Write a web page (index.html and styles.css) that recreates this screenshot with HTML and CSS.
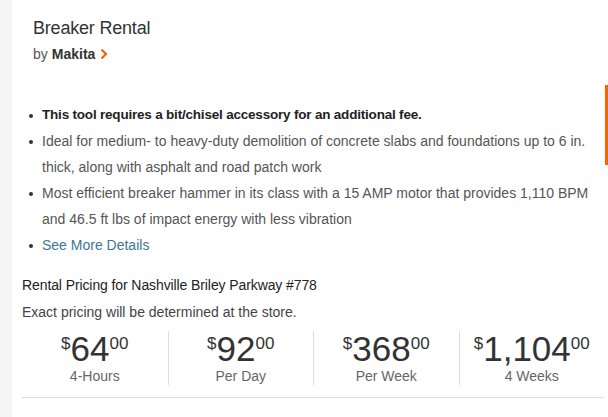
FILE: index.html
```html
<!DOCTYPE html>
<html>
<head>
<meta charset="utf-8">
<link rel="stylesheet" href="styles.css">
</head>
<body>
<div class="panel">
  <div class="head">
    <h1 class="title">Breaker Rental</h1>
    <div class="brand">by <b>Makita</b> <svg class="chev" width="8" height="12" viewBox="0 0 8 12"><polyline points="1.5,1.5 6,6 1.5,10.5" fill="none" stroke="#f96302" stroke-width="2.2"/></svg></div>
  </div>
  <ul class="bullets">
    <li class="strong">This tool requires a bit/chisel accessory for an additional fee.</li>
    <li>Ideal for medium- to heavy-duty demolition of concrete slabs and foundations up to 6 in. thick, along with asphalt and road patch work</li>
    <li>Most efficient breaker hammer in its class with a 15 AMP motor that provides 1,110 BPM and 46.5 ft lbs of impact energy with less vibration</li>
    <li class="link">See More Details</li>
  </ul>
  <div class="pricing">
    <div class="ptitle">Rental Pricing for Nashville Briley Parkway #778</div>
    <div class="pnote">Exact pricing will be determined at the store.</div>
    <div class="cols">
      <div class="col"><div class="price"><span class="sup">$</span>64<span class="sup">00</span></div><div class="lbl">4-Hours</div></div>
      <div class="col"><div class="price"><span class="sup">$</span>92<span class="sup">00</span></div><div class="lbl">Per Day</div></div>
      <div class="col"><div class="price"><span class="sup">$</span>368<span class="sup">00</span></div><div class="lbl">Per Week</div></div>
      <div class="col"><div class="price"><span class="sup">$</span>1,104<span class="sup">00</span></div><div class="lbl">4 Weeks</div></div>
    </div>
    <div class="rule"></div>
  </div>
  <div class="scroll"></div>
</div>
</body>
</html>
```
FILE: styles.css
```css
html, body {
  margin: 0;
  padding: 0;
  background: #f5f5f5;
  font-family: "Liberation Sans", Arial, sans-serif;
}
.panel {
  position: relative;
  margin-left: 12px;
  background: #fff;
  height: 417px;
  overflow: hidden;
  box-sizing: border-box;
  padding: 17px 4px 0 10px;
}
.head {
  padding-left: 11px;
}
.title {
  margin: 0;
  font-size: 18px;
  line-height: 22px;
  font-weight: normal;
  color: #333;
  letter-spacing: -0.2px;
}
.brand {
  margin-top: 6px;
  font-size: 14px;
  line-height: 18px;
  color: #555;
  display: flex;
  align-items: center;
  gap: 4px;
}
.brand b {
  color: #333;
}
.chev {
  margin-left: 1px;
}
.bullets {
  list-style: none;
  margin: 39px 0 0 0;
  padding: 0 0 0 8px;
  font-size: 14px;
  line-height: 26px;
  color: #555;
}
.bullets li {
  position: relative;
  padding-left: 12px;
}
.bullets li::before {
  content: "";
  position: absolute;
  left: -1px;
  top: 12px;
  width: 4px;
  height: 4px;
  border-radius: 50%;
  background: #333;
}
.bullets li.strong {
  font-size: 13.5px;
  font-weight: bold;
  color: #222;
  letter-spacing: -0.2px;
}
.bullets li.link {
  color: #3e7697;
}
.pricing {
  margin-top: 18px;
}
.ptitle {
  font-size: 14px;
  line-height: 18px;
  color: #222;
  letter-spacing: -0.1px;
}
.pnote {
  margin-top: 9px;
  font-size: 14px;
  line-height: 18px;
  color: #444;
}
.cols {
  display: grid;
  grid-template-columns: repeat(4, 1fr);
  margin-top: 10px;
}
.col {
  text-align: center;
  border-left: 1px solid #ddd;
  height: 54px;
}
.col:first-child {
  border-left: none;
}
.price {
  font-size: 35px;
  line-height: 36px;
  color: #333;
}
.sup {
  font-size: 17px;
  line-height: 16px;
  vertical-align: 12px;
}
.lbl {
  font-size: 14px;
  line-height: 18px;
  color: #666;
  margin-top: 0;
}
.rule {
  margin-top: 12px;
  height: 1px;
  background: #ddd;
}
.scroll {
  position: absolute;
  right: 0;
  top: 85px;
  width: 3px;
  height: 80px;
  background: #f96302;
}
```
